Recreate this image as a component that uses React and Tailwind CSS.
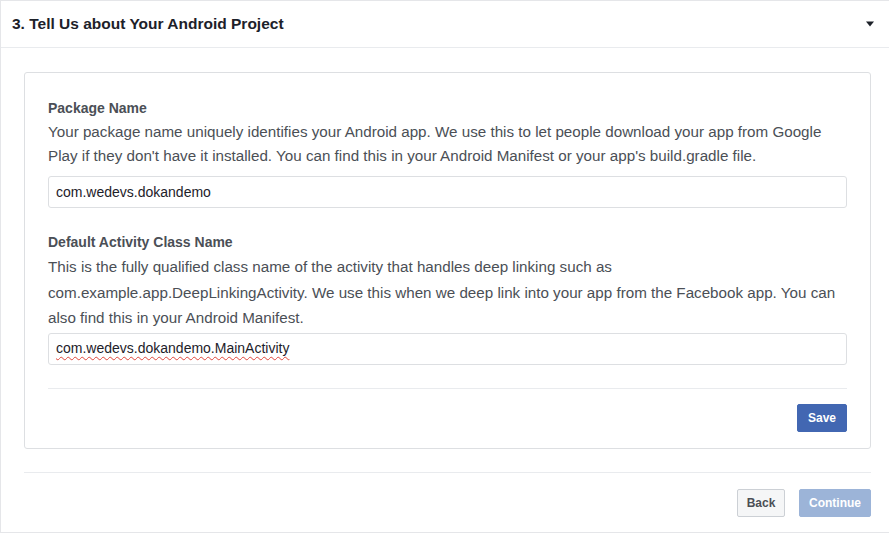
import { useState } from "react";

const font = { fontFamily: '"Liberation Sans", Arial, sans-serif' };

const Field = ({ label, children, value, spell, leading, inputGap, className }) => (
  <div className={className}>
    <div className="text-[14px] font-bold text-[#4b4f56] leading-[20px]">{label}</div>
    <p className={"text-[15.2px] text-[#4b4f56] mt-[2px] " + leading}>{children}</p>
    <div
      className={
        "h-[32px] border border-[#dddfe2] rounded-[3px] bg-white flex items-center px-[7px] " + inputGap
      }
    >
      <span
        className={
          "text-[14px] text-[#1d2129] " +
          (spell ? "underline decoration-wavy decoration-[#e0463b] decoration-1 underline-offset-[3px]" : "")
        }
      >
        {value}
      </span>
    </div>
  </div>
);

export default function App() {
  const [open] = useState(true);
  return (
    <div className="w-[889px] h-[537px] bg-white" style={font}>
      <div className="w-[889px] h-[533px] border-l border-t border-b border-[#e5e6e9] bg-white">
        {/* header */}
        <div className="h-[47px] flex items-center justify-between pl-[11px] pr-[14px] border-b border-[#e9ebee]">
          <h2 className="text-[15.5px] font-bold text-[#1d2129]">3. Tell Us about Your Android Project</h2>
          <svg width="10" height="6" viewBox="0 0 10 6">
            <path d="M1 0.5h8L5 5.5z" fill="#1d2129" />
          </svg>
        </div>

        <div className="pl-[23px] pr-[18px] pt-[24px]">
          {/* card */}
          {open && (
            <div className="border border-[#dddfe2] rounded-[3px] px-[23px] pt-[25px] pb-[16px]">
              <Field
                label="Package Name"
                value="com.wedevs.dokandemo"
                leading="leading-[24px]"
                inputGap="mt-[8px]"
              >
                Your package name uniquely identifies your Android app. We use this to let people download your app from Google
                <br />
                Play if they don't have it installed. You can find this in your Android Manifest or your app's build.gradle file.
              </Field>
              <Field
                label="Default Activity Class Name"
                value="com.wedevs.dokandemo.MainActivity"
                spell
                leading="leading-[25.5px]"
                inputGap="mt-[2px]"
                className="mt-[24px]"
              >
                This is the fully qualified class name of the activity that handles deep linking such as
                <br />
                com.example.app.DeepLinkingActivity. We use this when we deep link into your app from the Facebook app. You can
                <br />
                also find this in your Android Manifest.
              </Field>
              <div className="mt-[23px] border-t border-[#e9ebee] pt-[15px] flex justify-end">
                <button className="h-[28px] w-[50px] bg-[#4267b2] border border-[#4267b2] rounded-[2px] text-white text-[12px] font-bold">
                  Save
                </button>
              </div>
            </div>
          )}

          {/* footer */}
          <div className="mt-[23px] border-t border-[#e9ebee] pt-[16px] flex justify-end gap-[14px]">
            <button className="h-[28px] w-[48px] bg-[#f5f6f7] border border-[#ccd0d5] rounded-[2px] text-[#4b4f56] text-[12px] font-bold">
              Back
            </button>
            <button className="h-[28px] w-[72px] bg-[#9cb4d8] border border-[#9cb4d8] rounded-[2px] text-white text-[12px] font-bold">
              Continue
            </button>
          </div>
        </div>
      </div>
    </div>
  );
}
